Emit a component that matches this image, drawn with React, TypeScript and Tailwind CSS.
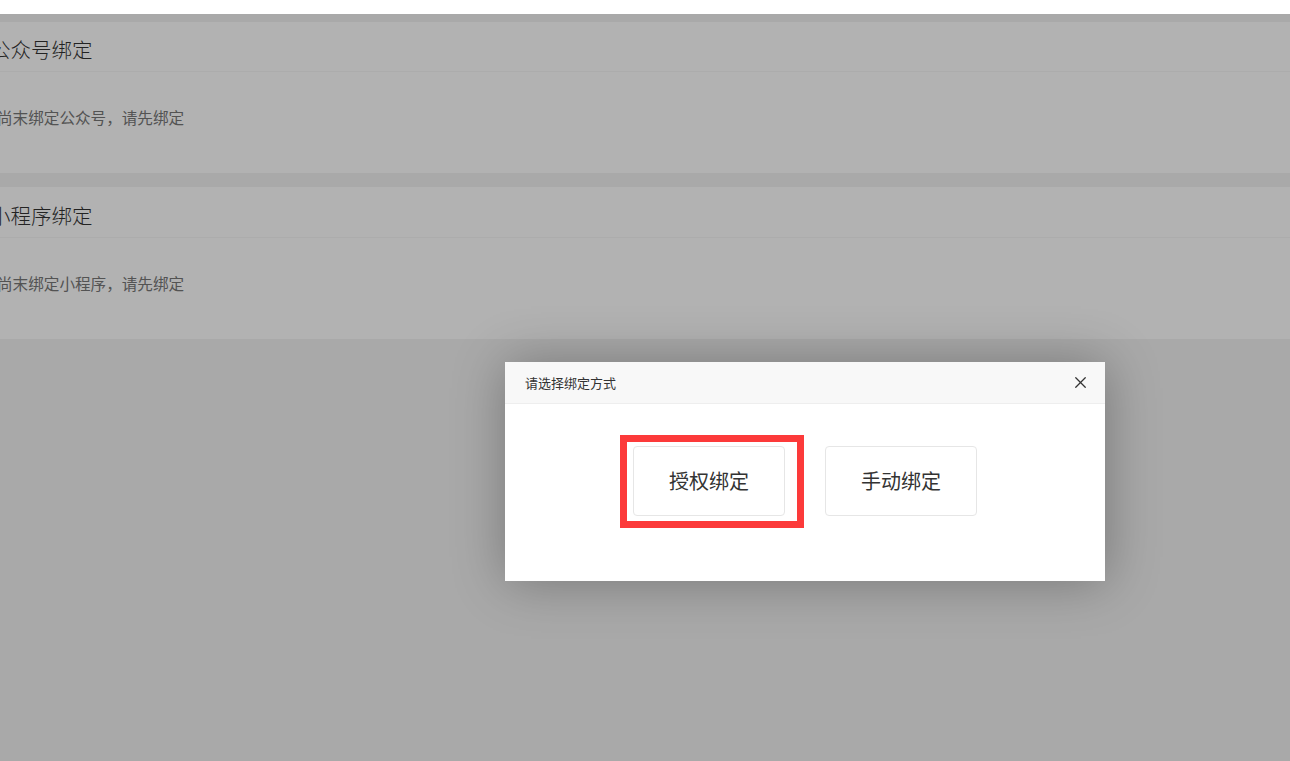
import { X } from "lucide-react"

const CARDS = [
  { title: "公众号绑定", desc: "尚末绑定公众号，请先绑定" },
  { title: "小程序绑定", desc: "尚末绑定小程序，请先绑定" },
]

export default function App() {
  return (
    <div
      className="relative h-[761px] w-[1290px] overflow-hidden bg-white"
      style={{ fontFamily: '"Noto Sans CJK SC", "Noto Sans", sans-serif' }}
    >
      {/* top strip */}
      <div className="h-[14px] bg-white" />

      {/* page under the shade */}
      <div className="relative h-[747px] bg-[#f2f2f2] pt-[8px]">
        <div className="flex flex-col gap-[14px]">
          {CARDS.map((c, i) => (
            <div key={c.title} className="bg-white">
              <div
                className={`flex items-center border-b border-[#f6f6f6] pt-[6px] ${i === 0 ? "h-[50px]" : "h-[51px]"}`}
              >
                <span className="ml-[-10px] text-[20.5px] font-light leading-none text-[#333]">
                  {c.title}
                </span>
              </div>
              <div className="flex h-[101px] items-center pb-[10px]">
                <span className="ml-[-3px] text-[15.6px] leading-none text-[#777]">
                  {c.desc}
                </span>
              </div>
            </div>
          ))}
        </div>

        {/* shade */}
        <div className="absolute inset-0 bg-black/30" />
      </div>

      {/* dialog */}
      <div className="absolute left-[505px] top-[362px] w-[600px] bg-white shadow-[1px_1px_50px_rgba(0,0,0,0.3)]">
        <div className="flex h-[42px] items-center justify-between border-b border-[#eee] bg-[#f8f8f8] pl-[20px] pr-[15px]">
          <span className="text-[13px] text-[#333]">请选择绑定方式</span>
          <X className="h-[19px] w-[19px] text-[#333]" strokeWidth={1.6} />
        </div>
        <div className="flex h-[177px] justify-center gap-[40px] pt-[42px]">
          <div className="relative">
            <div className="flex h-[70px] w-[152px] items-center justify-center rounded-[4px] border border-[#e6e6e6] text-[20px] text-[#333]">
              授权绑定
            </div>
            <div className="pointer-events-none absolute left-[-13px] top-[-11px] h-[93px] w-[184px] border-[7px] border-[#fc3a3a]" />
          </div>
          <div className="flex h-[70px] w-[152px] items-center justify-center rounded-[4px] border border-[#e6e6e6] text-[20px] text-[#333]">
            手动绑定
          </div>
        </div>
      </div>
    </div>
  )
}
